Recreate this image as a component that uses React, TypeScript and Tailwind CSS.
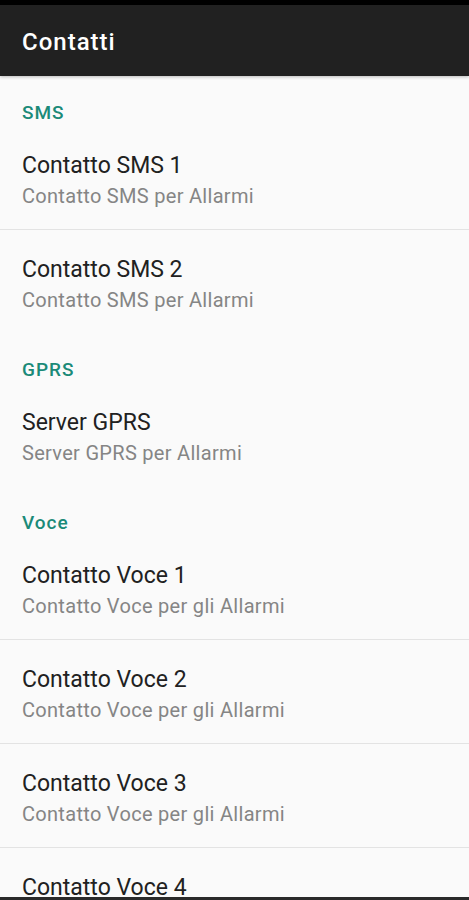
import React from 'react';

interface Pref {
  title: string;
  summary: string;
}

interface Category {
  name: string;
  items: Pref[];
}

const categories: Category[] = [
  {
    name: 'SMS',
    items: [
      { title: 'Contatto SMS 1', summary: 'Contatto SMS per Allarmi' },
      { title: 'Contatto SMS 2', summary: 'Contatto SMS per Allarmi' },
    ],
  },
  {
    name: 'GPRS',
    items: [{ title: 'Server GPRS', summary: 'Server GPRS per Allarmi' }],
  },
  {
    name: 'Voce',
    items: [
      { title: 'Contatto Voce 1', summary: 'Contatto Voce per gli Allarmi' },
      { title: 'Contatto Voce 2', summary: 'Contatto Voce per gli Allarmi' },
      { title: 'Contatto Voce 3', summary: 'Contatto Voce per gli Allarmi' },
      { title: 'Contatto Voce 4', summary: 'Contatto Voce per gli Allarmi' },
    ],
  },
];

const PrefRow: React.FC<{ pref: Pref; divider: boolean }> = ({ pref, divider }) => (
  <div className={`px-[22px] pt-[26px] pb-[21px] ${divider ? 'border-t border-[#e3e3e3]' : ''}`}>
    <div className="text-[23px] leading-[28px] text-[#212121]">{pref.title}</div>
    <div className="mt-[4px] text-[20px] leading-[24px] tracking-[0.3px] text-[#858585]">{pref.summary}</div>
  </div>
);

export default function App() {
  return (
    <div
      className="relative h-[900px] w-[469px] overflow-hidden bg-[#fafafa]"
      style={{ fontFamily: 'Roboto, "Noto Sans", sans-serif' }}
    >
      <div className="h-[5px] bg-black" />
      <div className="relative z-10 flex h-[71px] items-center bg-[#212121] px-[22px] pt-[3px] shadow-[0_1px_3px_rgba(0,0,0,0.25)]">
        <h1 className="text-[24px] font-medium tracking-[1px] text-white">Contatti</h1>
      </div>

      {categories.map((cat) => (
        <section key={cat.name}>
          <div className="h-[50px] px-[22px] pt-[26px] text-[19px] leading-[22px] font-medium tracking-[1px] text-[#1b8a78]">
            {cat.name}
          </div>
          {cat.items.map((pref, i) => (
            <PrefRow key={pref.title} pref={pref} divider={i > 0} />
          ))}
        </section>
      ))}

      <div className="absolute inset-x-0 bottom-0 h-[3px] bg-[#2a2a2a]" />
    </div>
  );
}
